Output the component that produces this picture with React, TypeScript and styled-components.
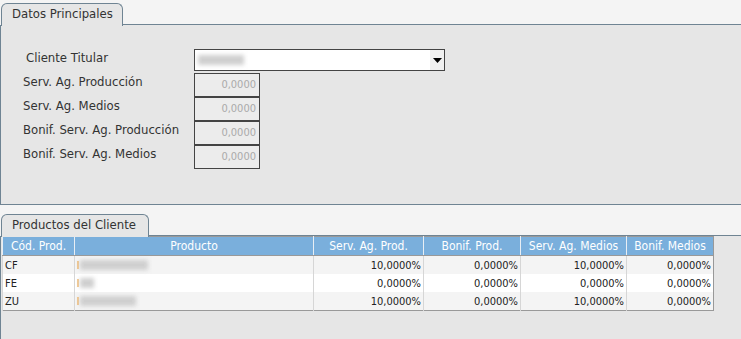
import React from "react";
import styled, { createGlobalStyle } from "styled-components";

const Global = createGlobalStyle`
  html, body { margin: 0; padding: 0; background: #f4f4f4; }
  body { font-family: "DejaVu Sans Condensed", "DejaVu Sans", sans-serif; font-size: 12px; color: #333; }
`;

const Page = styled.div`
  width: 741px;
  height: 339px;
  overflow: hidden;
  padding-top: 1px;
  box-sizing: border-box;
`;

const Section = styled.section<{ $gap?: number }>`
  margin-top: ${(p) => p.$gap ?? 0}px;
  display: flex;
  flex-direction: column;
`;

const TabStrip = styled.div`
  display: flex;
  align-items: flex-end;
  height: 24px;
  padding-left: 1px;
`;

const Tab = styled.div<{ $w: number }>`
  width: ${(p) => p.$w}px;
  height: 23px;
  box-sizing: border-box;
  border: 1px solid #6f8493;
  border-bottom: none;
  border-radius: 6px 6px 0 0;
  background: #e6e6e6;
  padding: 2px 0 0 10px;
  font-size: 13px;
  color: #333;
  margin-bottom: -1px;
  position: relative;
  z-index: 1;
  white-space: nowrap;
`;

const StripLine = styled.div`
  flex: 1;
  border-bottom: 1px solid #6f8493;
`;

const Panel = styled.div<{ $h: number; $bottom?: boolean }>`
  height: ${(p) => p.$h}px;
  box-sizing: border-box;
  background: #e6e6e6;
  border-left: 1px solid #6f8493;
  border-bottom: ${(p) => (p.$bottom ? "1px solid #6f8493" : "none")};
`;

const Form = styled.div`
  display: grid;
  grid-template-columns: 171px auto;
  row-gap: 1px;
  padding: 24px 0 0 22px;
`;

const Label = styled.div<{ $indent?: number; $top?: number }>`
  height: 23px;
  box-sizing: border-box;
  padding-top: ${(p) => p.$top ?? 0}px;
  line-height: 16px;
  padding-left: ${(p) => p.$indent ?? 0}px;
  color: #333;
  font-size: 13px;
  white-space: nowrap;
`;

const SelectBox = styled.div`
  width: 251px;
  height: 22px;
  box-sizing: border-box;
  border: 1px solid #444;
  background: #fff;
  display: flex;
  align-items: center;
  justify-content: space-between;
  padding-left: 3px;
  margin-bottom: 2px;
`;

const Blur = styled.div<{ $w: number; $h: number; $shade?: string }>`
  width: ${(p) => p.$w}px;
  height: ${(p) => p.$h}px;
  background: ${(p) => p.$shade ?? "#cfcfcf"};
  filter: blur(2px);
`;

const Arrow = styled.div`
  width: 14px;
  height: 20px;
  background: #f0f0f0;
  display: flex;
  align-items: center;
  justify-content: center;
`;

const NumInput = styled.div`
  width: 66px;
  height: 24px;
  box-sizing: border-box;
  border: 1px solid #444;
  background: #ececec;
  color: #aaa;
  text-align: right;
  padding: 4px 3px 0 0;
  font-size: 11px;
  margin-top: -1px;
`;

const Table = styled.table`
  border-collapse: collapse;
  margin-left: 1px;
  font-size: 11px;
  border: 1px solid #999;
`;

const Th = styled.th<{ $w: number }>`
  width: ${(p) => p.$w}px;
  height: 18px;
  padding: 0;
  background: #7aafdc;
  color: #fff;
  font-weight: normal;
  font-size: 12px;
  border-left: 1px solid #e8eef4;
  border-bottom: 1px solid #999;
`;

const Tr = styled.tr<{ $alt: boolean }>`
  background: ${(p) => (p.$alt ? "#fff" : "#f4f4f4")};
`;

const Td = styled.td<{ $right?: boolean }>`
  height: 18px;
  padding: 0 2px;
  text-align: ${(p) => (p.$right ? "right" : "left")};
  border-left: 1px solid #d6d6d6;
  color: #222;
  font-size: 11px;
  white-space: nowrap;
`;

const ProdCell = styled.div`
  display: flex;
  align-items: center;
  gap: 1px;
`;

const Dot = styled.span`
  width: 2px;
  height: 8px;
  background: #f0b060;
  opacity: 0.7;
`;

const cols = [
  { t: "Cód. Prod.", w: 71 },
  { t: "Producto", w: 238 },
  { t: "Serv. Ag. Prod.", w: 109 },
  { t: "Bonif. Prod.", w: 96 },
  { t: "Serv. Ag. Medios", w: 105 },
  { t: "Bonif. Medios", w: 86 },
];

const rows = [
  { c: "CF", w: 68, v: ["10,0000%", "0,0000%", "10,0000%", "0,0000%"] },
  { c: "FE", w: 14, v: ["0,0000%", "0,0000%", "0,0000%", "0,0000%"] },
  { c: "ZU", w: 56, v: ["10,0000%", "0,0000%", "10,0000%", "0,0000%"] },
];

const fields = [
  "Serv. Ag. Producción",
  "Serv. Ag. Medios",
  "Bonif. Serv. Ag. Producción",
  "Bonif. Serv. Ag. Medios",
];

export default function App() {
  return (
    <Page>
      <Global />
      <Section>
        <TabStrip>
          <Tab $w={122}>Datos Principales</Tab>
          <StripLine />
        </TabStrip>
        <Panel $h={180} $bottom>
          <Form>
            <Label $indent={3} $top={1}>
              Cliente Titular
            </Label>
            <SelectBox>
              <Blur $w={46} $h={10} />
              <Arrow>
                <svg width="9" height="5" viewBox="0 0 9 5">
                  <path d="M0 0H9L4.5 5Z" fill="#000" />
                </svg>
              </Arrow>
            </SelectBox>
            {fields.map((f) => (
              <React.Fragment key={f}>
                <Label>{f}</Label>
                <NumInput>0,0000</NumInput>
              </React.Fragment>
            ))}
          </Form>
        </Panel>
      </Section>
      <Section $gap={7}>
        <TabStrip>
          <Tab $w={148}>Productos del Cliente</Tab>
          <StripLine />
        </TabStrip>
        <Panel $h={104}>
          <Table>
            <thead>
              <tr>
                {cols.map((c) => (
                  <Th key={c.t} $w={c.w}>
                    {c.t}
                  </Th>
                ))}
              </tr>
            </thead>
            <tbody>
              {rows.map((r, i) => (
                <Tr key={r.c} $alt={i === 1}>
                  <Td>{r.c}</Td>
                  <Td>
                    <ProdCell>
                      <Dot />
                      <Blur $w={r.w} $h={10} />
                    </ProdCell>
                  </Td>
                  {r.v.map((v, j) => (
                    <Td key={j} $right>
                      {v}
                    </Td>
                  ))}
                </Tr>
              ))}
            </tbody>
          </Table>
        </Panel>
      </Section>
    </Page>
  );
}
